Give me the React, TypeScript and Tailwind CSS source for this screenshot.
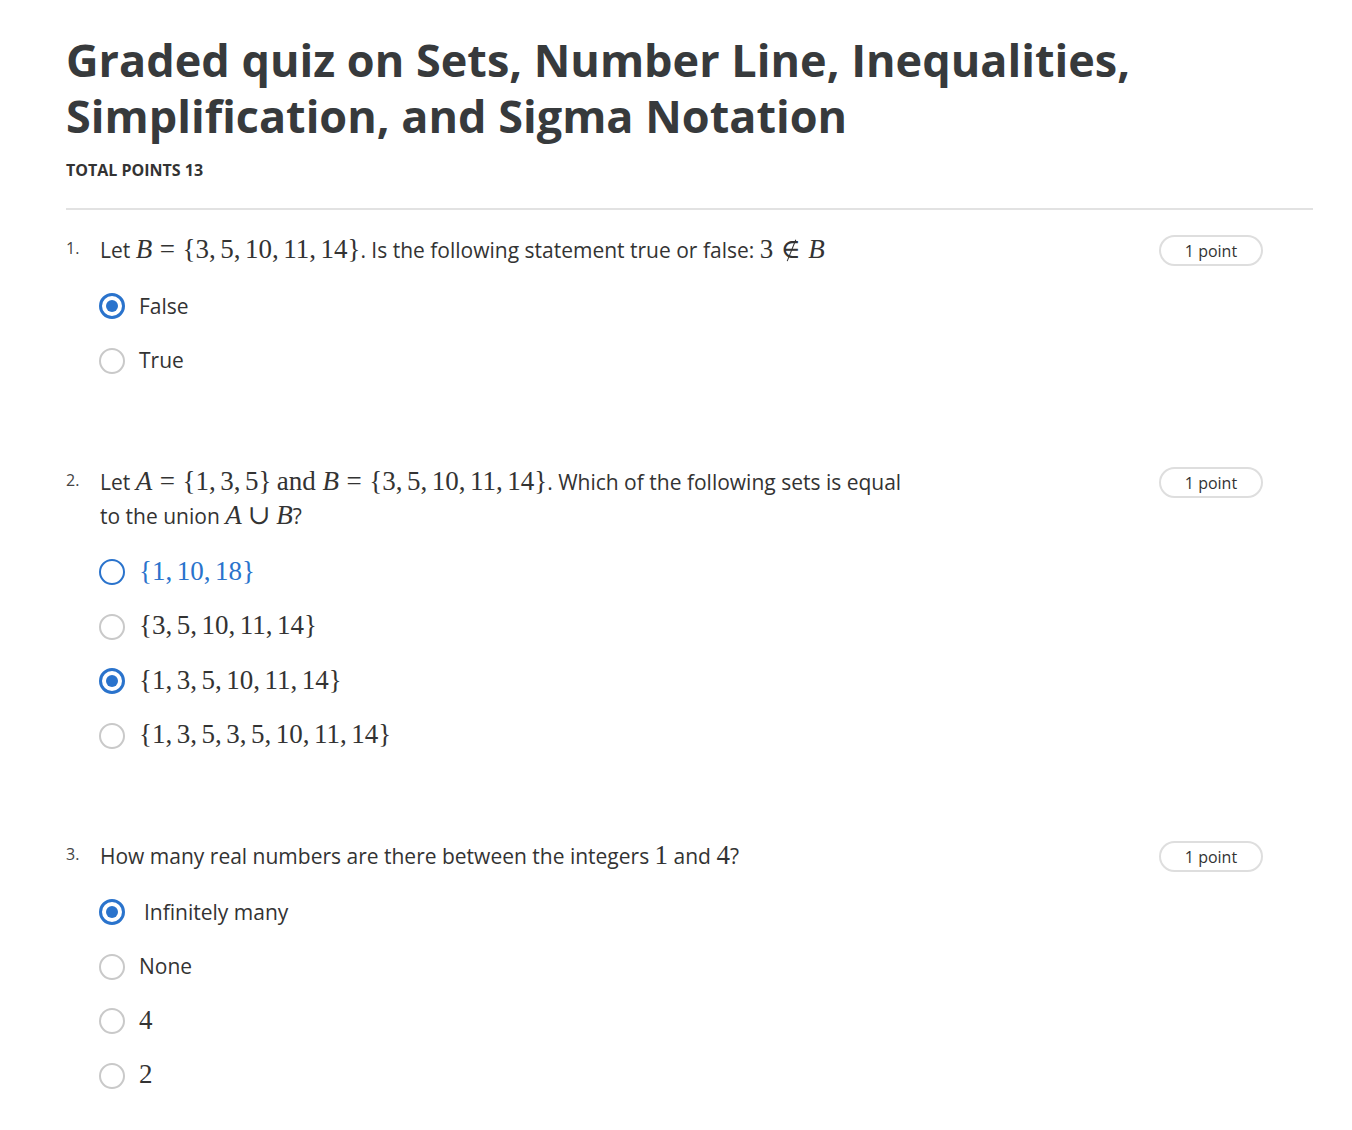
import type { ReactNode } from "react";

// --- tiny math renderer (KaTeX-ish look with a serif face) ---
const mathFont = "font-['Liberation_Serif','DejaVu_Serif',serif]";

function M({ children }: { children: ReactNode }) {
  return <span className={`${mathFont} text-[27px] leading-none whitespace-nowrap`}>{children}</span>;
}

function V({ children }: { children: ReactNode }) {
  return <span className="italic">{children}</span>;
}

function Rel({ children }: { children: ReactNode }) {
  return <span className="mx-[0.2778em]">{children}</span>;
}

function Bin({ children }: { children: ReactNode }) {
  return <span className="mx-[0.2222em]">{children}</span>;
}

// "not an element of": ∈ with a thin stroke through it
function NotIn() {
  return (
    <span className="mx-[0.2778em] relative inline-block">
      ∈
      <span className="absolute left-1/2 top-[0.12em] w-[1.2px] h-[0.85em] bg-current rotate-[22deg]" />
    </span>
  );
}

function Set({ items }: { items: number[] }) {
  return (
    <span>
      {"{"}
      {items.map((n, i) => (
        <span key={i}>
          {n}
          {i < items.length - 1 && <span className="mr-[0.1667em]">,</span>}
        </span>
      ))}
      {"}"}
    </span>
  );
}

function Radio({ state }: { state: "on" | "off" | "hover" }) {
  if (state === "on") {
    return (
      <span className="w-[26px] h-[26px] rounded-full border-[3px] border-[#2a73cc] flex items-center justify-center shrink-0">
        <span className="w-[12px] h-[12px] rounded-full bg-[#2a73cc]" />
      </span>
    );
  }
  return (
    <span
      className={`w-[26px] h-[26px] rounded-full border-[2.5px] shrink-0 ${
        state === "hover" ? "border-[#2a73cc]" : "border-[#c9c9c9]"
      }`}
    />
  );
}

function Option({
  state = "off",
  children,
  textClass = "",
}: {
  state?: "on" | "off" | "hover";
  children: ReactNode;
  textClass?: string;
}) {
  return (
    <div className="h-[54.5px] flex items-center pl-[33px]">
      <Radio state={state} />
      <span
        className={`ml-[14px] text-[21px] ${state === "hover" ? "text-[#2a73cc]" : "text-[#333]"} ${textClass}`}
      >
        {children}
      </span>
    </div>
  );
}

function Question({
  num,
  children,
  options,
  className = "",
}: {
  num: number;
  children: ReactNode;
  options: ReactNode;
  className?: string;
}) {
  return (
    <div className={className}>
      <div className="flex items-start">
        <span className="w-[34px] text-[16px] text-[#444] leading-[30px] shrink-0">{num}.</span>
        <div className="flex-1 text-[21px] leading-[34px] text-[#333]">{children}</div>
        <span className="mt-[2px] mr-[50px] w-[104px] h-[31px] rounded-full border-2 border-[#dedede] flex items-center justify-center text-[16px] text-[#333] shrink-0">
          1 point
        </span>
      </div>
      <div className="mt-[12px]">{options}</div>
    </div>
  );
}

export default function App() {
  return (
    <div className="min-h-screen bg-white font-['Open_Sans','Liberation_Sans',sans-serif] pl-[66px] pr-[39px] pt-[32px] pb-10">
      <h1 className="text-[45px] leading-[56px] font-bold text-[#373a3c]">
        Graded quiz on Sets, Number Line, Inequalities,
        <br />
        Simplification, and Sigma Notation
      </h1>
      <div className="mt-[16px] text-[16px] leading-[20px] font-bold text-[#333]">TOTAL POINTS 13</div>
      <div className="mt-[28px] border-t-2 border-[#e2e2e2]" />

      <Question
        num={1}
        className="mt-[23px]"
        options={
          <>
            <Option state="on">False</Option>
            <Option>True</Option>
          </>
        }
      >
        Let{" "}
        <M>
          <V>B</V>
          <Rel>=</Rel>
          <Set items={[3, 5, 10, 11, 14]} />
        </M>
        . Is the following statement true or false:{" "}
        <M>
          3<NotIn />
          <V>B</V>
        </M>
      </Question>

      <Question
        num={2}
        className="mt-[77px]"
        options={
          <>
            <Option state="hover">
              <M>
                <Set items={[1, 10, 18]} />
              </M>
            </Option>
            <Option>
              <M>
                <Set items={[3, 5, 10, 11, 14]} />
              </M>
            </Option>
            <Option state="on">
              <M>
                <Set items={[1, 3, 5, 10, 11, 14]} />
              </M>
            </Option>
            <Option>
              <M>
                <Set items={[1, 3, 5, 3, 5, 10, 11, 14]} />
              </M>
            </Option>
          </>
        }
      >
        Let{" "}
        <M>
          <V>A</V>
          <Rel>=</Rel>
          <Set items={[1, 3, 5]} />
          <span className="ml-[0.2em]">and</span> <V>B</V>
          <Rel>=</Rel>
          <Set items={[3, 5, 10, 11, 14]} />
        </M>
        . Which of the following sets is equal
        <br />
        to the union{" "}
        <M>
          <V>A</V>
          <Bin>∪</Bin>
          <V>B</V>
        </M>
        ?
      </Question>

      <Question
        num={3}
        className="mt-[76px]"
        options={
          <>
            <Option state="on" textClass="ml-[19px]">
              Infinitely many
            </Option>
            <Option>None</Option>
            <Option>
              <M>4</M>
            </Option>
            <Option>
              <M>2</M>
            </Option>
          </>
        }
      >
        How many real numbers are there between the integers <M>1</M> and <M>4</M>?
      </Question>
    </div>
  );
}
